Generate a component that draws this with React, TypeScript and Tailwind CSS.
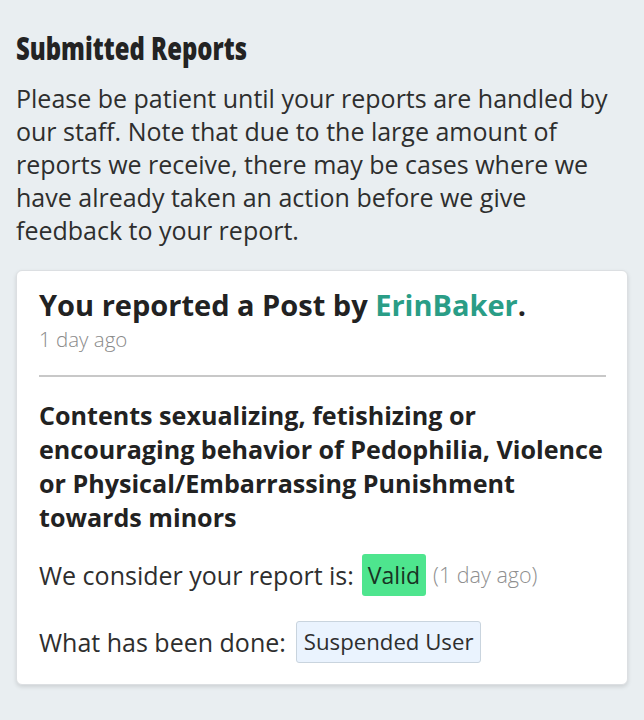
export default function App() {
  return (
    <div className="min-h-[720px] bg-[#e9eef1] px-4 pt-[28px] pb-8 text-[#2e2e2e] font-['Open_Sans',sans-serif]">
      <h2 className="text-[31px] font-extrabold leading-[40px] text-[#232323]">
        <span className="inline-block origin-left scale-x-[0.77] whitespace-nowrap">Submitted Reports</span>
      </h2>
      <p className="mt-[14px] text-[25px] leading-[33px]">
        Please be patient until your reports are handled by our staff. Note that due to the large amount of reports we
        receive, there may be cases where we have already taken an action before we give feedback to your report.
      </p>

      <div className="mt-[23px] rounded-md border border-[#dcdfe2] bg-white pl-[22px] pr-[20px] pt-[14px] pb-[21px] shadow-[0_2px_4px_rgba(0,0,0,0.12)]">
        <div className="text-[29px] font-bold leading-[40px] text-[#222]">
          You reported a Post by <span className="text-[#2a9d86]">ErinBaker</span>.
        </div>
        <div className="text-[20.5px] font-light leading-[28px] text-[#8a8a8a]">1 day ago</div>

        <hr className="mr-[1px] mt-[22px] border-t-2 border-[#c8c8c8]" />

        <div className="mt-[21px] text-[25.1px] font-bold leading-[34px] text-[#222]">
          Contents sexualizing, fetishizing or encouraging behavior of Pedophilia, Violence or Physical/Embarrassing
          Punishment towards minors
        </div>

        <div className="mt-[20px] flex items-center text-[25px] leading-[34px]">
          <span>We consider your report is:</span>
          <span className="ml-[8px] rounded-[3px] bg-[#4ee58e] px-[6px] py-[4px] text-[23px] text-[#183323]">Valid</span>
          <span className="ml-[7px] text-[21.5px] font-light text-[#8f8f8f]">(1 day ago)</span>
        </div>

        <div className="mt-[25px] flex items-center text-[25px] leading-[34px]">
          <span>What has been done:</span>
          <span className="ml-[10px] rounded-[3px] border border-[#c9d4de] bg-[#eaf3fe] px-[7px] py-[3px] text-[22.2px]">
            Suspended User
          </span>
        </div>
      </div>
    </div>
  )
}
